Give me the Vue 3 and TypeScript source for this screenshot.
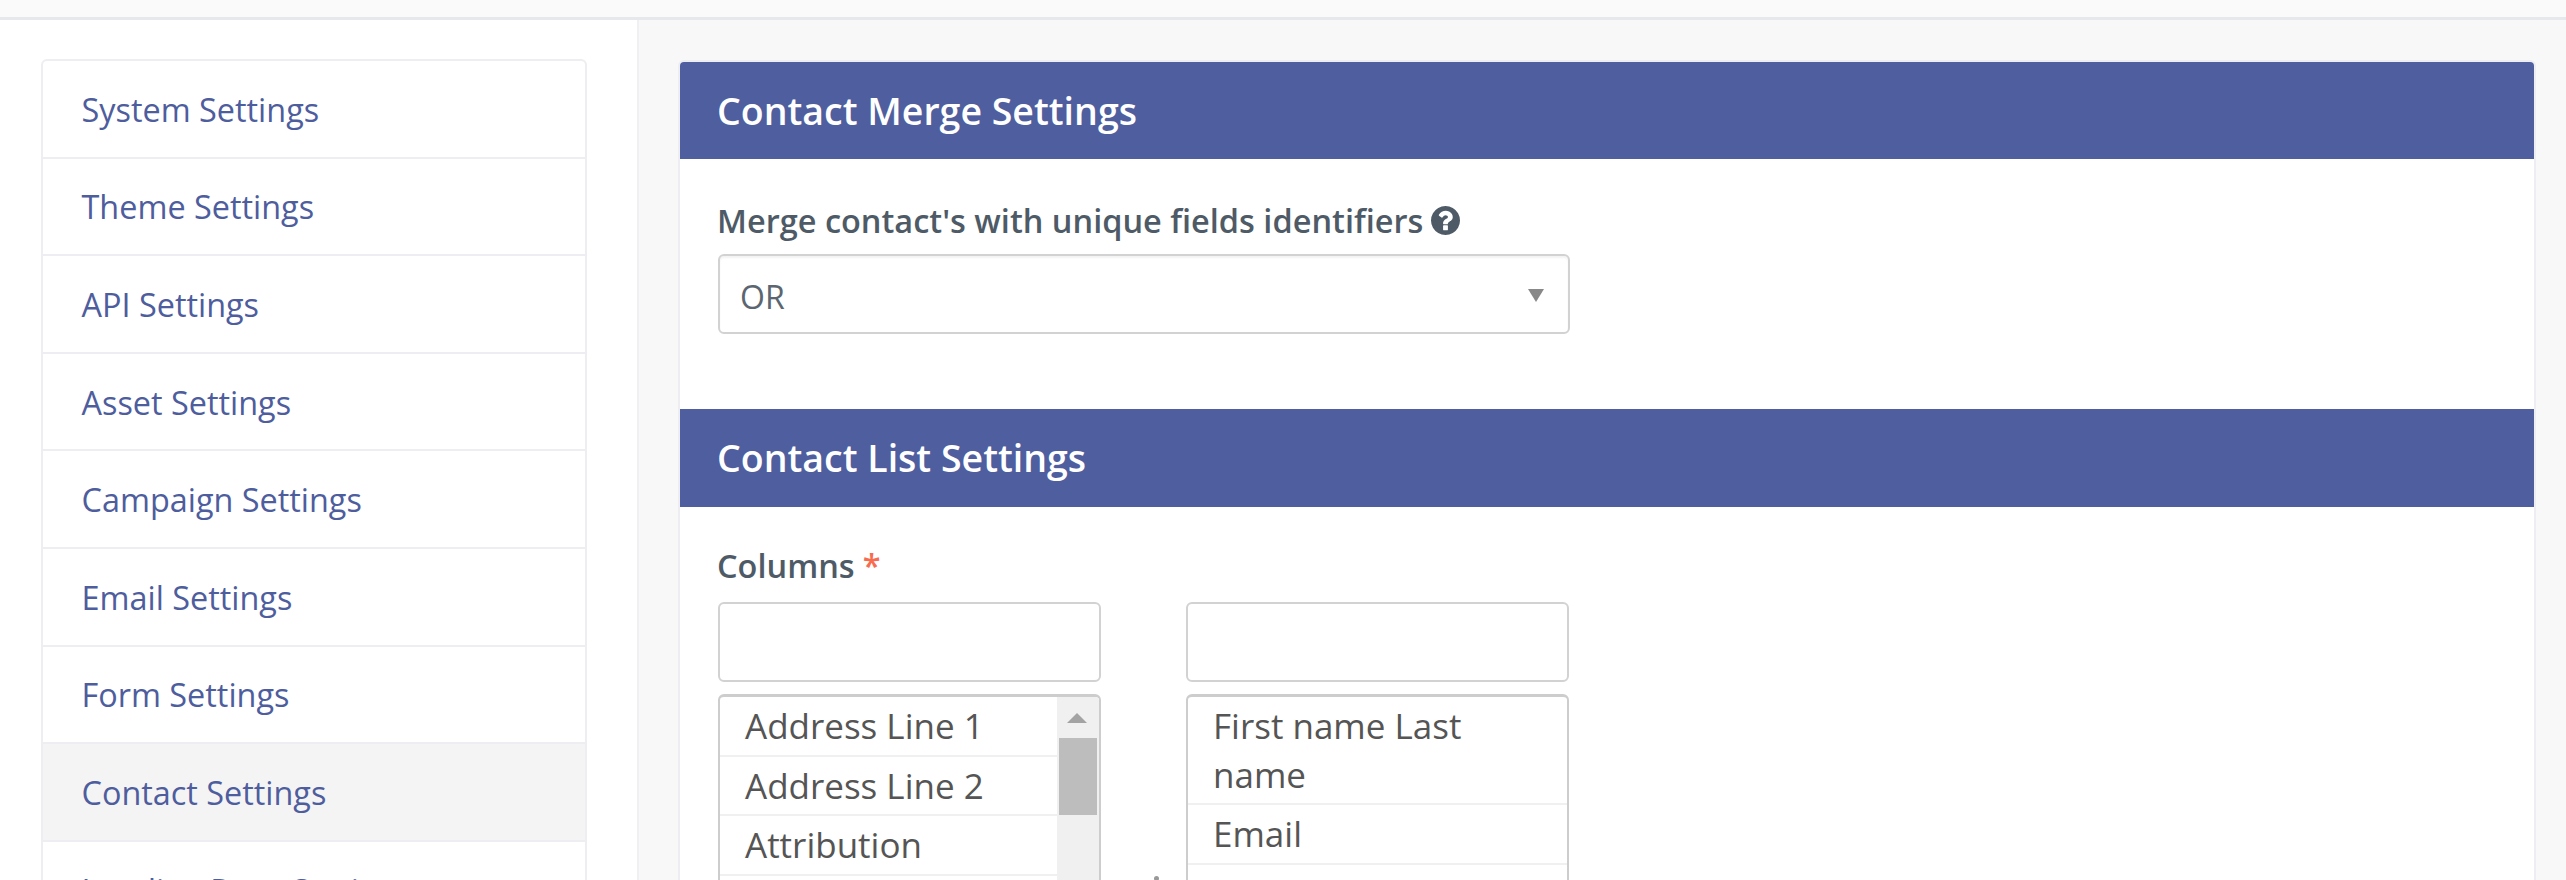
<script setup lang="ts">
const navItems: string[] = [
  'System Settings', 'Theme Settings', 'API Settings', 'Asset Settings', 'Campaign Settings',
  'Email Settings', 'Form Settings', 'Contact Settings', 'Landing Page Settings'
]
const available: string[] = ['Address Line 1', 'Address Line 2', 'Attribution', 'City']
const chosen: string[] = ['First name Last name', 'Email', 'Mobile']
</script>

<template>
  <div class="page">
    <header class="topbar"></header>
    <div class="content">
      <aside class="sidebar">
        <nav class="nav">
          <a v-for="item in navItems" :key="item" class="nav-item" :class="{ active: item === 'Contact Settings' }">{{ item }}</a>
        </nav>
      </aside>
      <main class="main">
        <section class="card">
          <h3 class="card-head">Contact Merge Settings</h3>
          <div class="card-body merge">
            <label class="label">
              <span>Merge contact's with unique fields identifiers</span>
              <svg class="help" viewBox="0 0 1536 1536" aria-hidden="true"><path transform="translate(-128 -128)" d="M1024 1376v-192q0-14-9-23t-23-9h-192q-14 0-23 9t-9 23v192q0 14 9 23t23 9h192q14 0 23-9t9-23zm256-672q0-88-55.5-163t-138.5-116-170-41q-243 0-371 213-15 24 8 42l132 100q7 6 19 6 16 0 25-12 53-68 86-92 34-24 86-24 48 0 85.5 26t37.5 59q0 38-20 61t-68 45q-63 28-115.5 86.5t-52.5 125.5v36q0 14 9 23t23 9h192q14 0 23-9t9-23q0-19 21.5-49.5t54.5-49.5q32-18 49-28.5t46-35 44.5-48 28-60.5 12.5-81zm384 192q0 209-103 385.5t-279.5 279.5-385.5 103-385.5-103-279.5-279.5-103-385.5 103-385.5 279.5-279.5 385.5-103 385.5 103 279.5 279.5 103 385.5z"/></svg>
            </label>
            <div class="select">
              <span>OR</span>
              <i class="caret"></i>
            </div>
          </div>
          <h3 class="card-head second">Contact List Settings</h3>
          <div class="card-body columns">
            <label class="label"><span>Columns</span><span class="req">*</span></label>
            <div class="picker">
              <div class="col">
                <input class="search" type="text" />
                <div class="list">
                  <ul class="rows">
                    <li v-for="row in available" :key="row">{{ row }}</li>
                  </ul>
                  <div class="track">
                    <i class="up"></i>
                    <div class="thumb"></div>
                  </div>
                </div>
              </div>
              <i class="mid"></i>
              <div class="col">
                <input class="search" type="text" />
                <div class="list">
                  <ul class="rows">
                    <li v-for="row in chosen" :key="row">{{ row }}</li>
                  </ul>
                </div>
              </div>
            </div>
          </div>
        </section>
      </main>
    </div>
  </div>
</template>

<style>
html, body { margin: 0; height: 880px; overflow: hidden; background: #fff; }
</style>

<style scoped>
.page { height: 880px; overflow: hidden; font-family: "Open Sans", sans-serif; display: flex; flex-direction: column; }
.topbar { height: 17px; flex: none; background: #fafafa; border-bottom: 3px solid #e6e8ec; }
.content { flex: 1; display: flex; min-height: 0; }
.sidebar { width: 637px; flex: none; background: #fff; padding: 39px 50px 0 41px; box-sizing: border-box; }
.nav { display: flex; flex-direction: column; border: 2px solid #eeeef2; border-radius: 6px; overflow: hidden; }
.nav-item { height: 95.6px; flex: none; display: flex; align-items: center; padding-left: 38.5px; font-size: 32.4px; color: #4e5d9d; border-bottom: 2px solid #eeeef2; }
.nav-item.active { background: #f4f4f5; }
.main { flex: 1; background: #f8f8f8; border-left: 2px solid #f0f0f3; padding: 40px 30px 0 39px; min-width: 0; }
.card { border: 2px solid #eeeef2; border-radius: 6px; background: #fff; overflow: hidden; }
.card-head { margin: 0; height: 97px; display: flex; align-items: center; padding-left: 37px; background: #4e5e9e; color: #fff; font-size: 37.5px; font-weight: 600; }
.card-head.second { height: 98px; padding-bottom: 1px; box-sizing: border-box; }
.card-body { padding: 40px 37px 0; }
.merge { height: 250px; box-sizing: border-box; padding-top: 40px; }
.label { display: flex; align-items: center; gap: 8px; height: 42px; color: #4e5b67; font-size: 32.5px; font-weight: 600; white-space: nowrap; }
.help { width: 29px; height: 29px; fill: #4e5b67; flex: none; }
.select { box-sizing: border-box; margin: 13px 0 0 1px; width: 852px; height: 80px; border: 2px solid #d2d2d2; border-radius: 6px; display: flex; align-items: center; justify-content: space-between; padding: 4px 24px 0 20px; font-size: 32px; color: #5b6670; box-shadow: inset 0 2px 2px rgba(0, 0, 0, 0.05); }
.caret { width: 0; height: 0; border-left: 8px solid transparent; border-right: 8px solid transparent; border-top: 13px solid #888; margin-top: -1px; }
.req { color: #f86b4f; }
.columns { padding-top: 37px; padding-bottom: 0; }
.picker { display: flex; gap: 85px; margin: 16px 0 0 1px; width: 852px; position: relative; }
.col { width: 383px; flex: none; display: flex; flex-direction: column; gap: 12px; }
.search { box-sizing: border-box; width: 100%; height: 80px; border: 2px solid #d2d2d2; border-radius: 6px; background: #fff; outline: none; margin: 0; }
.list { box-sizing: border-box; height: 300px; border: 2px solid #cdcdcd; border-top-width: 3px; border-radius: 6px 6px 0 0; display: flex; overflow: hidden; }
.rows { list-style: none; margin: 0; padding: 0; flex: 1; min-width: 0; }
.rows li { padding: 5px 24px 4px 25px; font-size: 35px; line-height: 48.5px; color: #555; border-bottom: 2px solid #f0f0f0; }
.track { width: 42px; flex: none; background: #f0f0f0; position: relative; }
.up { position: absolute; top: 16px; left: 10px; width: 0; height: 0; border-left: 10px solid transparent; border-right: 10px solid transparent; border-bottom: 10px solid #a3a3a3; }
.thumb { position: absolute; top: 41px; left: 2px; width: 38px; height: 77px; background: #bdbdbd; }
.mid { position: absolute; left: 436px; top: 274px; width: 5px; height: 5px; border-radius: 50%; background: #999; }
</style>
